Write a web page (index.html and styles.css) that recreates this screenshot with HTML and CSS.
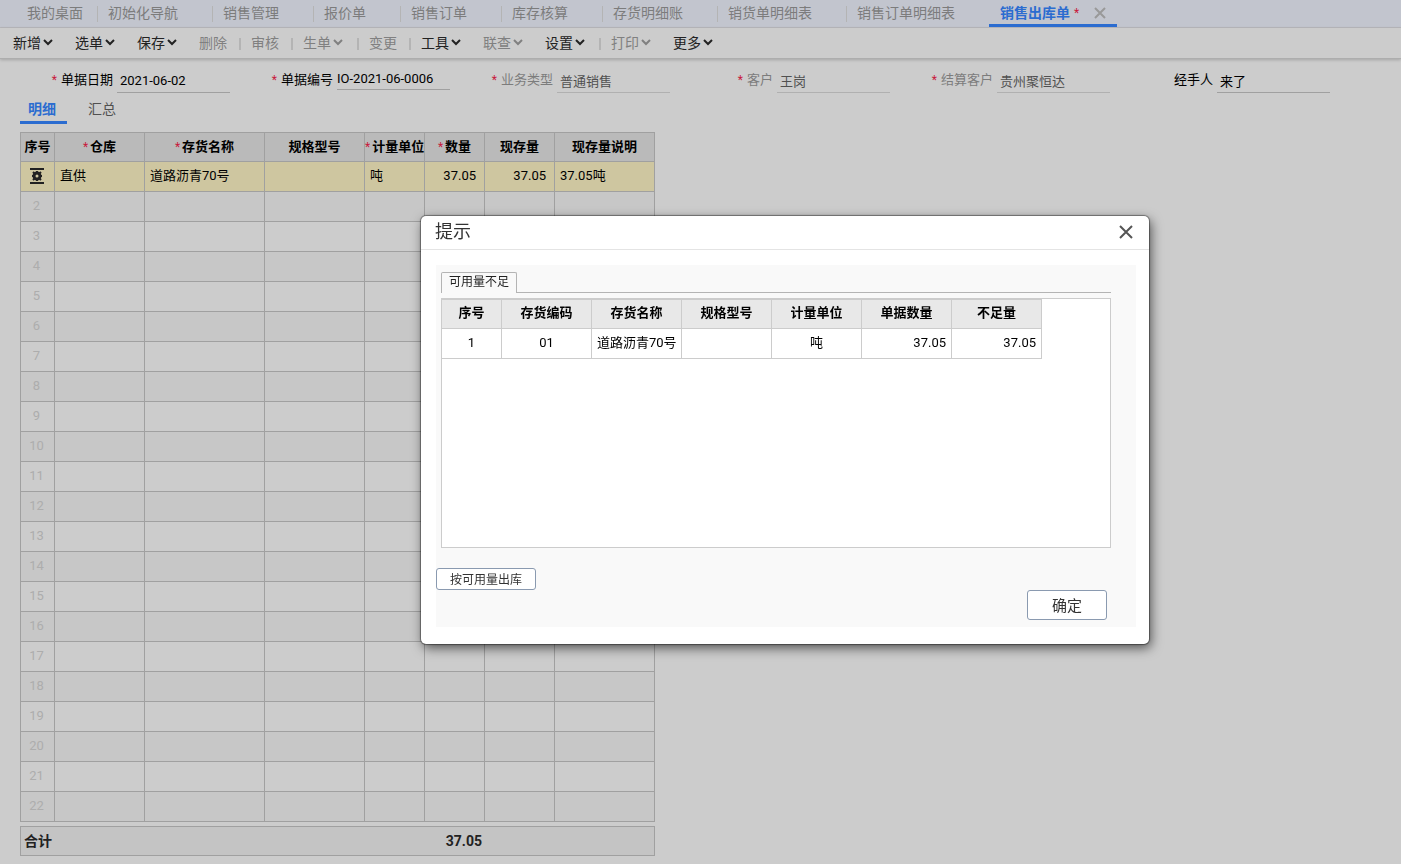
FILE: index.html
```html
<!DOCTYPE html>
<html lang="zh-CN">
<head>
  <meta charset="UTF-8">
  <meta name="viewport" content="width=device-width, initial-scale=1.0">
  <title>销售出库单</title>
  <link rel="stylesheet" href="styles.css">
</head>
<body>
  <!-- 页签 -->
  <nav class="page-tabs">
    <a class="first" href="#">我的桌面</a>
    <a href="#">初始化导航</a>
    <a href="#">销售管理</a>
    <a href="#">报价单</a>
    <a href="#">销售订单</a>
    <a href="#">库存核算</a>
    <a href="#">存货明细账</a>
    <a href="#">销货单明细表</a>
    <a href="#">销售订单明细表</a>
    <div class="current">
      <a href="#">销售出库单</a>
      <span class="star">*</span>
      <button type="button" class="tab-close" aria-label="关闭页签">
        <svg width="12" height="12" viewBox="0 0 12 12"><path d="M1 1l10 10M11 1L1 11" /></svg>
      </button>
    </div>
  </nav>

  <!-- 工具栏 -->
  <div class="toolbar">
    <button type="button">新增<svg class="arrow" viewBox="0 0 10 8"><path d="M1 1l4 4 4-4" /></svg></button>
    <button type="button">选单<svg class="arrow" viewBox="0 0 10 8"><path d="M1 1l4 4 4-4" /></svg></button>
    <button type="button">保存<svg class="arrow" viewBox="0 0 10 8"><path d="M1 1l4 4 4-4" /></svg></button>
    <button type="button" disabled>删除</button>
    <span class="sep"></span>
    <button type="button" disabled>审核</button>
    <span class="sep"></span>
    <button type="button" disabled>生单<svg class="arrow" viewBox="0 0 10 8"><path d="M1 1l4 4 4-4" /></svg></button>
    <span class="sep wide"></span>
    <button type="button" disabled>变更</button>
    <span class="sep"></span>
    <button type="button">工具<svg class="arrow" viewBox="0 0 10 8"><path d="M1 1l4 4 4-4" /></svg></button>
    <button type="button" disabled>联查<svg class="arrow" viewBox="0 0 10 8"><path d="M1 1l4 4 4-4" /></svg></button>
    <button type="button">设置<svg class="arrow" viewBox="0 0 10 8"><path d="M1 1l4 4 4-4" /></svg></button>
    <span class="sep wide"></span>
    <button type="button" disabled>打印<svg class="arrow" viewBox="0 0 10 8"><path d="M1 1l4 4 4-4" /></svg></button>
    <button type="button">更多<svg class="arrow" viewBox="0 0 10 8"><path d="M1 1l4 4 4-4" /></svg></button>
  </div>

  <!-- 单据表头 -->
  <form class="bill-head">
    <div class="field">
      <label for="bill-date"><span class="star">*</span>单据日期</label>
      <input type="text" id="bill-date" value="2021-06-02">
    </div>
    <div class="field">
      <label for="bill-code"><span class="star">*</span>单据编号</label>
      <input type="text" id="bill-code" class="code" value="IO-2021-06-0006">
    </div>
    <div class="field">
      <label for="bill-type"><span class="star">*</span>业务类型</label>
      <input type="text" id="bill-type" value="普通销售" disabled>
    </div>
    <div class="field">
      <label for="customer"><span class="star">*</span>客户</label>
      <input type="text" id="customer" value="王岗" disabled>
    </div>
    <div class="field">
      <label for="settle-customer"><span class="star">*</span>结算客户</label>
      <input type="text" id="settle-customer" value="贵州聚恒达" disabled>
    </div>
    <div class="field">
      <label for="handler">经手人</label>
      <input type="text" id="handler" value="来了">
    </div>
  </form>

  <div class="detail-tabs">
    <button type="button" class="active">明细</button>
    <button type="button">汇总</button>
  </div>

  <!-- 明细表 -->
  <main class="detail">
    <table class="grid">
      <colgroup>
        <col class="w-34"><col class="w-90"><col class="w-120"><col class="w-100">
        <col class="w-60"><col class="w-60"><col class="w-70"><col class="w-100">
      </colgroup>
      <thead>
        <tr>
          <th>序号</th>
          <th><span class="star">*</span>仓库</th>
          <th><span class="star">*</span>存货名称</th>
          <th>规格型号</th>
          <th><span class="star">*</span>计量单位</th>
          <th><span class="star">*</span>数量</th>
          <th>现存量</th>
          <th>现存量说明</th>
        </tr>
      </thead>
      <tbody id="detail-rows">
        <tr class="selected">
          <td class="no">
            <svg width="16" height="16" viewBox="0 0 16 16" stroke="#222" stroke-width="2">
              <path d="M1 1h14M1 15h14" />
              <circle cx="8" cy="8" r="3" stroke-width="3" />
              <path d="M8 3v2M8 11v2M3 8h2M11 8h2M4 4l2 2M10 10l2 2M12 4l-2 2M6 10l-2 2" />
            </svg>
          </td>
          <td>直供</td>
          <td>道路沥青70号</td>
          <td></td>
          <td>吨</td>
          <td class="num">37.05</td>
          <td class="num">37.05</td>
          <td>37.05吨</td>
        </tr>
      </tbody>
    </table>
    <div class="total">
      <span>合计</span>
      <span class="total-qty">37.05</span>
    </div>
  </main>

  <!-- 提示窗口 -->
  <div class="mask">
    <div class="dialog" role="dialog" aria-labelledby="dialog-title">
      <div class="dialog-head">
        <h2 id="dialog-title">提示</h2>
        <button type="button" class="dialog-close" aria-label="关闭">
          <svg width="14" height="14" viewBox="0 0 14 14"><path d="M1 1l12 12M13 1L1 13" /></svg>
        </button>
      </div>
      <div class="dialog-body">
        <div class="inner-tabs">
          <button type="button">可用量不足</button>
        </div>
        <div class="shortage">
          <table>
            <colgroup>
              <col class="w-60"><col class="w-90"><col class="w-90"><col class="w-90">
              <col class="w-90"><col class="w-90"><col class="w-90">
            </colgroup>
            <thead>
              <tr>
                <th>序号</th>
                <th>存货编码</th>
                <th>存货名称</th>
                <th>规格型号</th>
                <th>计量单位</th>
                <th>单据数量</th>
                <th>不足量</th>
              </tr>
            </thead>
            <tbody>
              <tr>
                <td>1</td>
                <td>01</td>
                <td>道路沥青70号</td>
                <td></td>
                <td>吨</td>
                <td class="num">37.05</td>
                <td class="num">37.05</td>
              </tr>
            </tbody>
          </table>
        </div>
        <button type="button" class="btn btn-small">按可用量出库</button>
        <button type="button" class="btn btn-ok">确定</button>
      </div>
    </div>
  </div>

  <script>
    // 补足空行
    const rows = document.getElementById('detail-rows');
    for (let i = 2; i <= 22; i++) {
      const tr = document.createElement('tr');
      tr.innerHTML = `<td class="no">${i}</td>` + '<td></td>'.repeat(7);
      rows.appendChild(tr);
    }
  </script>
</body>
</html>
```

FILE: styles.css
```css
* {
  box-sizing: border-box;
}

body {
  margin: 0;
  min-height: 100vh;
  background-color: #ccc;
  color: #000;
  font-family: Roboto, "Noto Sans CJK SC", sans-serif;
  font-size: 13px;
  line-height: 20px;
}

button, input {
  font-family: inherit;
  margin: 0;
  padding: 0;
  border: none;
  background: none;
}

a {
  color: inherit;
  text-decoration: none;
}

svg {
  fill: none;
}

.star {
  color: #c8193c;
  font-size: 12px;
  font-weight: normal;
}

/* 页签 */
.page-tabs {
  display: flex;
  align-items: center;
  height: 28px;
  padding-left: 16px;
  background-color: #c2c5ce;
  border-bottom: 1px solid #b8b8bc;
  color: #7c7c7c;
  font-size: 14px;
  white-space: nowrap;
}

.page-tabs > a {
  height: 16px;
  line-height: 14px;
  padding: 0 34px 0 10px;
  border-left: 1px solid #b4b4b4;
}

.page-tabs > a.first {
  padding-right: 14px;
  border-left-color: transparent;
}

.current {
  display: flex;
  align-items: center;
  width: 128px;
  height: 27px;
  padding: 2px 0 0 11px;
  border-bottom: 3px solid #2b6cd0;
}

.current a {
  color: #2b6cd0;
  font-weight: bold;
}

.current .star {
  margin-left: 4px;
}

.tab-close {
  display: flex;
  margin-left: 15px;
}

.tab-close svg {
  stroke: #999;
  stroke-width: 2;
}

/* 工具栏 */
.toolbar {
  display: flex;
  align-items: center;
  height: 31px;
  padding-left: 1px;
  border-bottom: 1px solid #adadad;
  box-shadow: 0 1px 3px rgba(0, 0, 0, 0.2);
}

.toolbar button {
  display: flex;
  align-items: center;
  padding: 0 12px;
  color: #222;
  font-size: 14px;
  line-height: 20px;
  white-space: nowrap;
}

.toolbar button:disabled {
  color: #808080;
}

.arrow {
  width: 10px;
  height: 8px;
  margin-left: 2px;
  margin-right: -2px;
  stroke: currentColor;
  stroke-width: 2;
}

.sep {
  width: 2px;
  height: 12px;
  margin-top: 2px;
  margin-right: -2px;
  background-color: #b4b4b4;
}

.sep.wide {
  margin-left: 4px;
}

/* 单据表头 */
.bill-head {
  display: flex;
  flex-wrap: wrap;
  padding: 9px 0 0 10px;
}

.field {
  display: flex;
  width: 220px;
  height: 25px;
  align-items: flex-start;
}

.field label {
  width: 107px;
  padding-right: 4px;
  line-height: 24px;
  text-align: right;
}

.field .star {
  margin-right: 4px;
}

.field input {
  width: 113px;
  height: 25px;
  padding-left: 3px;
  border-bottom: 1px solid #a0a0a0;
  color: #000;
  font-size: 13px;
}

.field input.code {
  height: 22px;
  padding-left: 0;
}

.field:has(input:disabled) label {
  color: #7c7c7c;
}

.field input:disabled {
  color: #505050;
  border-bottom-color: #b0b0b0;
}

.detail-tabs {
  display: flex;
  gap: 13px;
  padding: 3px 20px 0;
}

.detail-tabs button {
  padding: 5px 8px 3px;
  border-bottom: 3px solid transparent;
  color: #505050;
  font-size: 14px;
  line-height: 17px;
}

.detail-tabs .active {
  padding-right: 11px;
  border-bottom-color: #2b6cd0;
  color: #2b6cd0;
  font-weight: bold;
}

/* 明细表 */
.detail {
  padding: 8px 20px;
}

table {
  table-layout: fixed;
  border-collapse: collapse;
}

.grid {
  width: 635px;
}

.w-34 { width: 34px; }
.w-60 { width: 60px; }
.w-70 { width: 70px; }
.w-90 { width: 90px; }
.w-100 { width: 100px; }
.w-120 { width: 120px; }

th, td {
  height: 30px;
  padding: 0 5px 2px;
  border: 1px solid #a0a0a0;
  white-space: nowrap;
}

th {
  height: 29px;
  padding: 0 0 1px;
  background-color: #bababa;
}

.grid th .star {
  margin-right: 2px;
}

.grid tbody tr:nth-child(even) {
  background-color: #c7c7c7;
}

.grid tbody .selected {
  background-color: #cec6a0;
}

.no {
  padding: 0 2px 2px 0;
  color: #adadad;
  text-align: center;
}

.no svg {
  display: block;
  margin: 0 auto;
}

.num {
  text-align: right;
}

.grid .num {
  padding-right: 8px;
}

.total {
  display: flex;
  align-items: center;
  width: 635px;
  height: 30px;
  margin-top: 4px;
  padding: 0 0 1px 3px;
  background-color: #c4c4c4;
  border: 1px solid #a0a0a0;
  color: #222;
  font-size: 14px;
  font-weight: bold;
}

.total-qty {
  width: 430px;
  text-align: right;
}

/* 提示窗口 */
.mask {
  position: fixed;
  inset: 0;
  display: flex;
  align-items: center;
  justify-content: center;
  padding: 0 0 4px 169px;
}

.dialog {
  width: 728px;
  background-color: #fff;
  border-radius: 5px;
  box-shadow: 0 0 1px 1px rgba(0, 0, 0, 0.4), 2px 4px 12px rgba(0, 0, 0, 0.6);
}

.dialog-head {
  display: flex;
  align-items: center;
  justify-content: space-between;
  height: 34px;
  padding: 0 16px 2px 14px;
  border-bottom: 1px solid #e4e4e4;
}

.dialog-head h2 {
  margin: 0;
  color: #333;
  font-size: 18px;
  font-weight: normal;
}

.dialog-close {
  display: flex;
}

.dialog-close svg {
  stroke: #555;
  stroke-width: 2;
}

.dialog-body {
  display: flex;
  flex-direction: column;
  margin: 15px 13px 17px 15px;
  padding: 7px 0;
  background-color: #f9f9f9;
}

.inner-tabs {
  display: flex;
  margin: 0 25px 5px 5px;
  border-bottom: 1px solid #b4b4b4;
}

.inner-tabs button {
  width: 76px;
  height: 21px;
  margin-bottom: -1px;
  padding-bottom: 2px;
  border: 1px solid #b4b4b4;
  border-bottom: none;
  border-radius: 2px 2px 0 0;
  background-color: #f9f9f9;
  color: #222;
  font-size: 12px;
  line-height: 18px;
}

.shortage {
  height: 250px;
  margin: 0 25px 20px 5px;
  border: 1px solid #ccc;
  background-color: #fff;
}

.shortage table {
  width: 601px;
  margin-left: -1px;
}

.shortage th, .shortage td {
  border-color: #ccc;
}

.shortage th {
  padding-bottom: 2px;
  background-color: #e8e8e8;
}

.shortage td:not(.num) {
  text-align: center;
}

.btn {
  padding-bottom: 2px;
  border: 1px solid #8a9ab0;
  border-radius: 3px;
  background-color: #fff;
  color: #333;
}

.btn-small {
  width: 100px;
  height: 22px;
  font-size: 12px;
}

.btn-ok {
  align-self: flex-end;
  width: 80px;
  height: 30px;
  margin-right: 29px;
  font-size: 15px;
}
```
